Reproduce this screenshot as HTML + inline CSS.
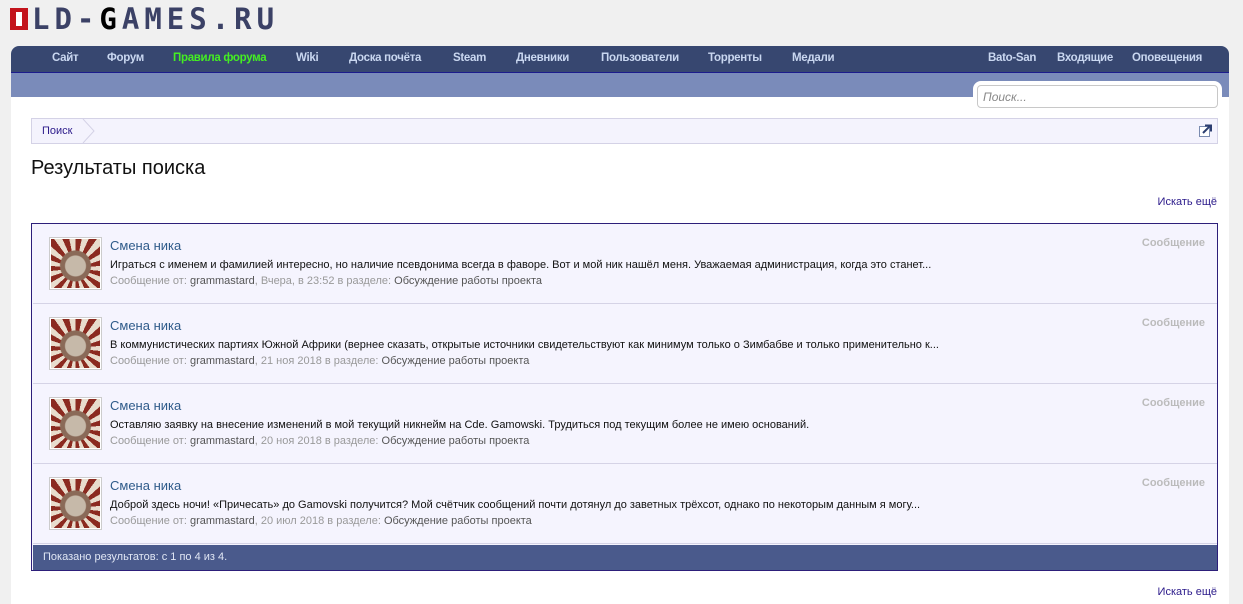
<!DOCTYPE html>
<html><head><meta charset="utf-8"><style>
html,body{margin:0;height:604px;overflow:hidden}
body{background:#f0f0f0;font-family:"Liberation Sans",Arial,sans-serif;font-size:11px;width:1243px;position:relative}
.a{position:absolute}
.logo{left:10px;top:2px;font:bold 29px "DejaVu Sans Mono",monospace;color:#3b4166;letter-spacing:5px;white-space:nowrap}
.logo b{display:inline-block;width:18px;height:22px;background:#c3141c;position:relative;top:1px;margin-right:4px}
.logo b:after{content:"";position:absolute;left:6px;top:4px;width:6px;height:14px;background:#fff}
.wrap{left:11px;top:46px;width:1218px;height:560px;background:#fff;border-radius:8px 8px 0 0;overflow:hidden}
.nav{height:26px;background:#374770;border-bottom:1px solid #1c1c8c}
.nav span{position:absolute;top:6px;color:#c9d7f0;font-size:11.5px;font-weight:bold;font-family:"Liberation Sans",sans-serif;letter-spacing:-0.3px}
.sub{height:24px;background:#7a8bba}
.search{left:977px;top:85px;width:239px;height:21px;border:1px solid #c8c8c8;border-radius:4px;background:#fff;box-shadow:0 0 0 4px #fff}
.search i{position:absolute;left:5px;top:4px;color:#888;font-size:12px}
.bc{left:31px;top:118px;width:1185px;height:24px;background:#f4f3fd;border:1px solid #d4d2e6}
.row{position:absolute;left:1px;width:1184px;height:79px;background:#f5f4fe;border-bottom:1px solid #d5d3e6}
.av{position:absolute;left:16px;top:13px;width:49px;height:49px;border:1px solid #ccc;padding:1px;background:#fff}
.av div{width:49px;height:49px;background:radial-gradient(circle at 50% 55%,#c6b9a9 0 10px,#8a6a58 11px 15px,transparent 16px),repeating-conic-gradient(from 0deg at 50% 60%,#8b2a20 0 12deg,#e8dccc 12deg 24deg)}
.t{position:absolute;left:77px;top:14px;color:#2f5b8a;font-size:13px}
.x{position:absolute;left:77px;top:35px;color:#111;white-space:nowrap}
.m{position:absolute;left:77px;top:51px;color:#999;white-space:nowrap}
.m b{font-weight:normal;color:#555}
.tag{position:absolute;right:12px;top:13px;color:#bbb;font-weight:bold;font-size:11px}
.more{right:26px;color:#2b1a8a}
</style></head><body>
<div class="a logo"><b></b>LD-<span style="color:#000">G</span>AMES.RU</div>
<div class="a wrap"><div class="nav">
<span style="left:41px">Сайт</span><span style="left:96px">Форум</span><span style="left:162px;color:#44ee22">Правила форума</span><span style="left:285px">Wiki</span><span style="left:338px">Доска почёта</span><span style="left:442px">Steam</span><span style="left:505px">Дневники</span><span style="left:590px">Пользователи</span><span style="left:697px">Торренты</span><span style="left:781px">Медали</span><span style="left:977px">Bato-San</span><span style="left:1046px">Входящие</span><span style="left:1121px">Оповещения</span>
</div><div class="sub"></div></div>
<div class="a search"><i>Поиск...</i></div>
<div class="a bc"><span style="position:absolute;left:10px;top:6px;color:#2b1a8a">Поиск</span>
<svg style="position:absolute;left:50px;top:0" width="14" height="24"><path d="M1 0L12 12L1 24" fill="none" stroke="#d4d2e6"/></svg>
<svg style="position:absolute;right:5px;top:5px" width="13" height="13"><rect x="0.5" y="2.5" width="10" height="10" fill="#fff" stroke="#7a8bb0"/><path d="M4 9L11 2M6 1.5h6v6" stroke="#2c3e70" stroke-width="2" fill="none"/></svg></div>
<div class="a" style="left:31px;top:157px;font-size:20px;color:#111">Результаты поиска</div>
<div class="a more" style="top:196px">Искать ещё</div>
<div class="a" style="left:31px;top:223px;width:1185px;height:346px;border:1px solid #2d1f7a;background:#f5f4fe">
<div class="row" style="top:0"><div class="av"><div></div></div><div class="t">Смена ника</div><div class="x">Играться с именем и фамилией интересно, но наличие псевдонима всегда в фаворе. Вот и мой ник нашёл меня. Уважаемая администрация, когда это станет...</div><div class="m">Сообщение от: <b>grammastard</b>, Вчера, в 23:52 в разделе: <b>Обсуждение работы проекта</b></div><div class="tag">Сообщение</div></div>
<div class="row" style="top:80px"><div class="av"><div></div></div><div class="t">Смена ника</div><div class="x">В коммунистических партиях Южной Африки (вернее сказать, открытые источники свидетельствуют как минимум только о Зимбабве и только применительно к...</div><div class="m">Сообщение от: <b>grammastard</b>, 21 ноя 2018 в разделе: <b>Обсуждение работы проекта</b></div><div class="tag">Сообщение</div></div>
<div class="row" style="top:160px"><div class="av"><div></div></div><div class="t">Смена ника</div><div class="x">Оставляю заявку на внесение изменений в мой текущий никнейм на Cde. Gamowski. Трудиться под текущим более не имею оснований.</div><div class="m">Сообщение от: <b>grammastard</b>, 20 ноя 2018 в разделе: <b>Обсуждение работы проекта</b></div><div class="tag">Сообщение</div></div>
<div class="row" style="top:240px"><div class="av"><div></div></div><div class="t">Смена ника</div><div class="x">Доброй здесь ночи! «Причесать» до Gamovski получится? Мой счётчик сообщений почти дотянул до заветных трёхсот, однако по некоторым данным я могу...</div><div class="m">Сообщение от: <b>grammastard</b>, 20 июл 2018 в разделе: <b>Обсуждение работы проекта</b></div><div class="tag">Сообщение</div></div>
<div style="position:absolute;left:1px;top:321px;width:1184px;height:25px;background:#4a5a8c;color:#e0e6f4"><span style="position:absolute;left:10px;top:6px">Показано результатов: с 1 по 4 из 4.</span></div>
</div>
<div class="a more" style="top:586px">Искать ещё</div>
</body></html>
